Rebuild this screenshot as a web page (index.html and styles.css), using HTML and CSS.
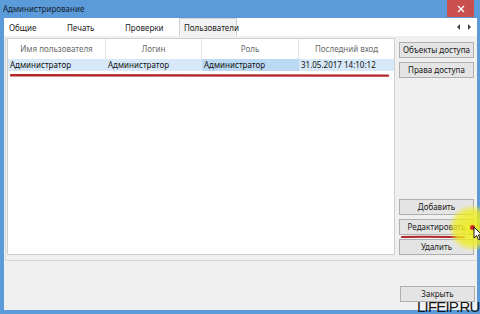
FILE: index.html
```html
<!DOCTYPE html>
<html lang="ru">
<head>
<meta charset="utf-8">
<link rel="stylesheet" href="styles.css">
</head>
<body>
<div class="window">
  <div class="titlebar">
    <div class="title">Администрирование</div>
    <div class="close"><svg width="8" height="8" viewBox="0 0 8 8"><path d="M1 1L7 7M7 1L1 7" stroke="#fff" stroke-width="1.3"/></svg></div>
  </div>
  <div class="client">
    <div class="tabstrip">
      <div class="tab">Общие</div>
      <div class="tab">Печать</div>
      <div class="tab">Проверки</div>
      <div class="tab active">Пользователи</div>
      <div class="arrows">
        <svg width="4" height="6" viewBox="0 0 4 6"><path d="M3 0L0 3L3 6Z" fill="#444"/></svg>
        <svg width="4" height="6" viewBox="0 0 4 6"><path d="M1 0L4 3L1 6Z" fill="#444"/></svg>
      </div>
    </div>
    <div class="panel">
      <div class="list">
        <div class="header">
          <div class="hcell c1">Имя пользователя</div>
          <div class="hcell c2">Логин</div>
          <div class="hcell c3">Роль</div>
          <div class="hcell c4">Последний вход</div>
        </div>
        <div class="row selected">
          <div class="cell c1">Администратор</div>
          <div class="cell c2">Администратор</div>
          <div class="cell c3 focus">Администратор</div>
          <div class="cell c4">31.05.2017 14:10:12</div>
        </div>
        <svg class="mark mark-list" width="380" height="5" viewBox="0 0 380 5"><path d="M1 2.2C80 1.6 200 1.8 378 2.6" stroke="#b3262b" stroke-width="2.4" fill="none" stroke-linecap="round"/></svg>
      </div>
      <div class="side">
        <button class="btn">Объекты доступа</button>
        <button class="btn">Права доступа</button>
        <div class="spacer"></div>
        <button class="btn">Добавить</button>
        <button class="btn edit">Редактировать
          <svg class="mark mark-btn" width="64" height="4" viewBox="0 0 64 4"><path d="M1 2C20 1.6 40 1.8 63 2.2" stroke="#b3262b" stroke-width="2" fill="none" stroke-linecap="round"/></svg>
        </button>
        <button class="btn">Удалить</button>
      </div>
    </div>
    <div class="footer">
      <button class="btn">Закрыть</button>
    </div>
  </div>
</div>
<div class="highlight"></div>
<div class="dot"></div>
<svg class="cursor" width="10" height="15" viewBox="0 0 10 15"><path d="M1 1L1 12L3.6 9.6L5.5 13.8L7.2 13L5.4 8.9L8.8 8.9Z" fill="#fff" stroke="#000" stroke-width="0.9" stroke-linejoin="round"/></svg>
<div class="watermark">LIFEIP.RU</div>
</body>
</html>
```
FILE: styles.css
```css
html, body {
  margin: 0;
  padding: 0;
}
body {
  width: 480px;
  height: 314px;
  overflow: hidden;
  background: #5b9bd9;
  position: relative;
  font-family: "Noto Sans", "Open Sans", sans-serif;
  font-size: 8px;
  color: #1a1a1a;
}
.window {
  display: flex;
  flex-direction: column;
  height: 314px;
}
.titlebar {
  height: 18px;
  flex: none;
  display: flex;
  justify-content: space-between;
  align-items: flex-start;
}
.title {
  line-height: 18px;
  padding-left: 3px;
  color: #15202c;
}
.close {
  width: 27px;
  height: 17px;
  margin-right: 6px;
  background: #c94f4e;
  display: flex;
  align-items: center;
  justify-content: center;
}
.client {
  flex: 1;
  margin: 0 3px 4px 4px;
  background: #f0f0f0;
  display: flex;
  flex-direction: column;
}
.tabstrip {
  height: 18px;
  flex: none;
  background: #ffffff;
  display: flex;
  padding-left: 1px;
}
.tab {
  width: 58px;
  box-sizing: border-box;
  padding-left: 4px;
  padding-top: 1px;
  line-height: 18px;
  white-space: nowrap;
}
.tab.active {
  background: #f2f2f2;
  border: 1px solid #d3d3d3;
  border-bottom: none;
  padding-top: 0;
}
.arrows {
  margin-left: auto;
  margin-right: 6px;
  display: flex;
  align-items: center;
  gap: 6px;
}
.panel {
  height: 225px;
  flex: none;
  box-sizing: border-box;
  display: flex;
  padding: 2px 0 5px 1px;
  border-left: 1px solid #dadada;
  border-bottom: 1px solid #d6d6d6;
  margin-left: 1px;
}
.list {
  width: 388px;
  box-sizing: border-box;
  background: #ffffff;
  border: 1px solid #cfcfcf;
  position: relative;
}
.header {
  display: flex;
  height: 20px;
}
.hcell {
  box-sizing: border-box;
  text-align: center;
  line-height: 20px;
  color: #6a6a6a;
  border-right: 1px solid #e3e3e3;
  white-space: nowrap;
}
.c1 { width: 98px; }
.c2 { width: 96px; }
.c3 { width: 97px; }
.c4 { width: 95px; }
.hcell.c4 { border-right: none; }
.row {
  display: flex;
  height: 12px;
}
.row.selected {
  background: #d7e9f8;
}
.cell {
  box-sizing: border-box;
  padding-left: 2px;
  line-height: 12px;
  white-space: nowrap;
  color: #111;
}
.cell.focus {
  background: #bcd9f3;
}
.mark {
  position: absolute;
  display: block;
}
.mark-list {
  left: 2px;
  top: 34px;
}
.side {
  width: 75px;
  margin-left: 4px;
  padding-top: 4px;
  display: flex;
  flex-direction: column;
  gap: 4px;
}
.spacer {
  flex: 1;
}
.btn {
  height: 16px;
  width: 75px;
  flex: none;
  margin: 0;
  padding: 0;
  box-sizing: border-box;
  background: #e4e4e4;
  border: 1px solid #afafaf;
  font-family: "Noto Sans", "Open Sans", sans-serif;
  font-size: 8px;
  color: #1a1a1a;
  line-height: 14px;
}
.btn.edit {
  position: relative;
}
.mark-btn {
  left: 1px;
  top: 15px;
}
.footer {
  flex: 1;
  display: flex;
  justify-content: flex-end;
  align-items: flex-start;
  padding-top: 25px;
  padding-right: 2px;
}
.highlight {
  position: absolute;
  left: 448px;
  top: 204px;
  width: 48px;
  height: 48px;
  border-radius: 50%;
  background: radial-gradient(circle, rgba(238,236,20,0.9) 0%, rgba(238,236,30,0.75) 50%, rgba(240,236,60,0) 70%);
}
.dot {
  position: absolute;
  left: 470px;
  top: 225px;
  width: 5px;
  height: 5px;
  border-radius: 50%;
  background: #d0282a;
}
.cursor {
  position: absolute;
  left: 473px;
  top: 226px;
}
.watermark {
  position: absolute;
  left: 417px;
  top: 299px;
  font-family: "Liberation Sans", sans-serif;
  font-size: 15px;
  line-height: 15px;
  letter-spacing: -0.8px;
  color: #151515;
}
```
